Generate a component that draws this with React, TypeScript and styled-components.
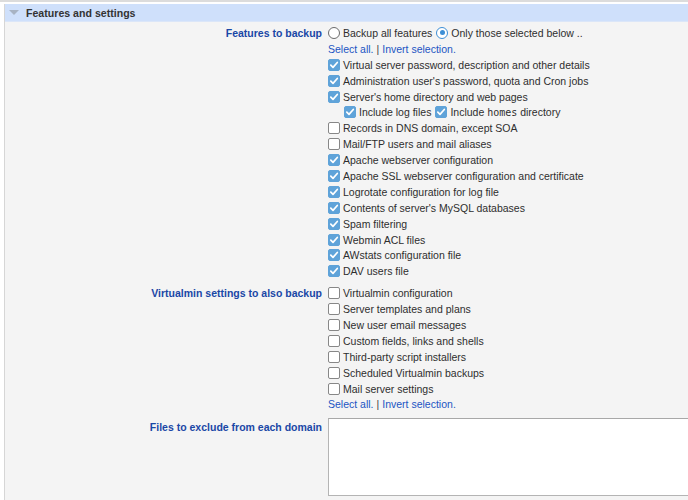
import React from "react";
import styled, { createGlobalStyle } from "styled-components";

const GlobalStyle = createGlobalStyle`
  html, body {
    margin: 0;
    padding: 0;
    background: #ffffff;
    overflow: hidden;
  }
  body {
    font-family: "Liberation Sans", Arial, sans-serif;
    font-size: 10.5px;
    color: #2e2e2e;
  }
`;

const featureRows: { label: string; checked: boolean }[] = [
  { label: "Virtual server password, description and other details", checked: true },
  { label: "Administration user's password, quota and Cron jobs", checked: true },
  { label: "Server's home directory and web pages", checked: true },
];

const featureRows2: { label: string; checked: boolean }[] = [
  { label: "Records in DNS domain, except SOA", checked: false },
  { label: "Mail/FTP users and mail aliases", checked: false },
  { label: "Apache webserver configuration", checked: true },
  { label: "Apache SSL webserver configuration and certificate", checked: true },
  { label: "Logrotate configuration for log file", checked: true },
  { label: "Contents of server's MySQL databases", checked: true },
  { label: "Spam filtering", checked: true },
  { label: "Webmin ACL files", checked: true },
  { label: "AWstats configuration file", checked: true },
  { label: "DAV users file", checked: true },
];

const vminRows = [
  "Virtualmin configuration",
  "Server templates and plans",
  "New user email messages",
  "Custom fields, links and shells",
  "Third-party script installers",
  "Scheduled Virtualmin backups",
  "Mail server settings",
];

export default function App() {
  return (
    <>
      <GlobalStyle />
      <Page>
        <Panel>
          <Header>
            <Arrow />
            <HeaderTitle>Features and settings</HeaderTitle>
          </Header>
          <Body>
            <Row>
              <Label>Features to backup</Label>
              <Value>
                <Line>
                  <Radio />
                  <span>Backup all features</span>
                  <Radio checked style={{ marginLeft: 4 }} />
                  <span>Only those selected below ..</span>
                </Line>
                <SelectLinks />
                {featureRows.map((r) => (
                  <CheckLine key={r.label} checked={r.checked} text={r.label} />
                ))}
                <Line $indent={16}>
                  <Check checked />
                  <span>Include log files</span>
                  <Check checked style={{ marginLeft: 4 }} />
                  <span>
                    Include <Mono>homes</Mono> directory
                  </span>
                </Line>
                {featureRows2.map((r) => (
                  <CheckLine key={r.label} checked={r.checked} text={r.label} />
                ))}
              </Value>
            </Row>
            <Row>
              <Label>Virtualmin settings to also backup</Label>
              <Value>
                {vminRows.map((r) => (
                  <CheckLine key={r} checked={false} text={r} />
                ))}
                <SelectLinks />
              </Value>
            </Row>
            <Row>
              <Label $offset={1}>Files to exclude from each domain</Label>
              <Value>
                <TextArea />
              </Value>
            </Row>
          </Body>
        </Panel>
      </Page>
    </>
  );
}

function CheckLine({ checked, text }: { checked: boolean; text: string }) {
  return (
    <Line>
      <Check checked={checked} />
      <span>{text}</span>
    </Line>
  );
}

function SelectLinks() {
  return (
    <Line>
      <Link>Select all.</Link>
      <Sep>|</Sep>
      <Link>Invert selection.</Link>
    </Line>
  );
}

function Check({ checked, style }: { checked?: boolean; style?: React.CSSProperties }) {
  return (
    <CheckBox $checked={!!checked} style={style}>
      {checked && (
        <svg width="10" height="10" viewBox="0 0 10 10">
          <path d="M1.8 5.2 L4 7.4 L8.3 2.5" fill="none" stroke="#fff" strokeWidth="1.7" strokeLinecap="round" strokeLinejoin="round" />
        </svg>
      )}
    </CheckBox>
  );
}

function Radio({ checked, style }: { checked?: boolean; style?: React.CSSProperties }) {
  return (
    <RadioBox $checked={!!checked} style={style}>
      {checked && <Dot />}
    </RadioBox>
  );
}

const Page = styled.div`
  border-top: 2px solid #dcdcdc;
  width: 688px;
  height: 498px;
  overflow: hidden;
`;

const Panel = styled.div`
  margin: 2px 0 0 4px;
  border-left: 1px solid #d6d6d6;
  background: #f4f4f4;
  height: 100%;
`;

const Header = styled.div`
  height: 17px;
  background: #cfe0fb;
  border-bottom: 1px solid #dbe6f8;
  display: flex;
  align-items: center;
  padding-left: 4px;
`;

const Arrow = styled.span`
  width: 0;
  height: 0;
  border-left: 5px solid transparent;
  border-right: 5px solid transparent;
  border-top: 5px solid #a8b3c3;
  margin-right: 7px;
`;

const HeaderTitle = styled.span`
  font-weight: bold;
  font-size: 10.6px;
  color: #333;
`;

const Body = styled.div`
  padding-top: 3px;
  display: flex;
  flex-direction: column;
  gap: 6px;
`;

const Row = styled.div`
  display: grid;
  grid-template-columns: 317px 1fr;
  column-gap: 6px;
  align-items: start;
`;

const Label = styled.div<{ $offset?: number }>`
  text-align: right;
  font-weight: bold;
  color: #1a47a6;
  line-height: 16px;
  margin-top: ${(p) => p.$offset || 0}px;
  white-space: nowrap;
`;

const Value = styled.div`
  display: flex;
  flex-direction: column;
`;

const Line = styled.div<{ $indent?: number }>`
  display: flex;
  align-items: center;
  height: 15.9px;
  white-space: nowrap;
  padding-left: ${(p) => p.$indent || 0}px;
`;

const CheckBox = styled.span<{ $checked: boolean }>`
  box-sizing: border-box;
  width: 12px;
  height: 12px;
  margin-right: 3px;
  border-radius: 2px;
  display: inline-flex;
  align-items: center;
  justify-content: center;
  flex-shrink: 0;
  background: ${(p) => (p.$checked ? "#5fa3d9" : "#ffffff")};
  border: 1.5px solid ${(p) => (p.$checked ? "#5fa3d9" : "#878787")};
`;

const RadioBox = styled.span<{ $checked: boolean }>`
  box-sizing: border-box;
  width: 12px;
  height: 12px;
  margin-right: 3px;
  border-radius: 50%;
  display: inline-flex;
  align-items: center;
  justify-content: center;
  flex-shrink: 0;
  background: #fff;
  border: 1.5px solid ${(p) => (p.$checked ? "#3d8fd6" : "#6b6b6b")};
`;

const Dot = styled.span`
  width: 5px;
  height: 5px;
  border-radius: 50%;
  background: #3d8fd6;
`;

const Mono = styled.span`
  font-family: "DejaVu Sans Mono", "Liberation Mono", monospace;
  font-size: 10px;
`;

const Link = styled.a`
  color: #1b55c3;
  cursor: pointer;
`;

const Sep = styled.span`
  color: #444;
  margin: 0 3px;
`;

const TextArea = styled.textarea`
  box-sizing: border-box;
  margin-top: 0;
  width: 420px;
  height: 78px;
  border: 1px solid #b4b4b4;
  border-top-color: #a8a8a8;
  background: #fff;
  resize: none;
  display: block;
`;
